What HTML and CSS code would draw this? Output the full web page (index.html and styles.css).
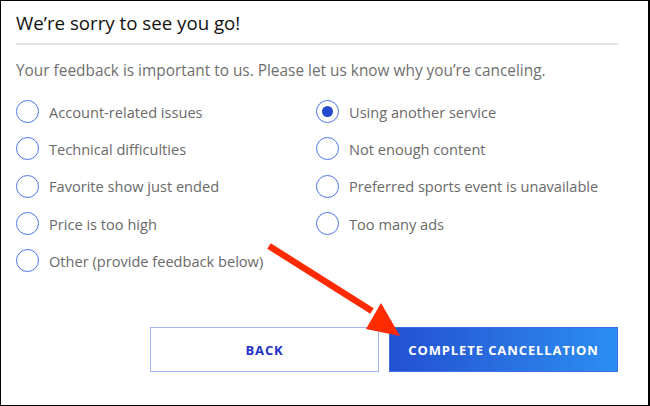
FILE: index.html
```html
<!DOCTYPE html>
<html>
<head>
<meta charset="utf-8">
<link rel="stylesheet" href="styles.css">
</head>
<body>
<div class="frame">
  <h1 class="title">We’re sorry to see you go!</h1>
  <div class="divider"></div>
  <p class="lead">Your feedback is important to us. Please let us know why you’re canceling.</p>
  <div class="options">
    <div class="col">
      <label class="opt"><span class="radio"></span>Account-related issues</label>
      <label class="opt"><span class="radio"></span>Technical difficulties</label>
      <label class="opt"><span class="radio"></span>Favorite show just ended</label>
      <label class="opt"><span class="radio"></span>Price is too high</label>
      <label class="opt"><span class="radio"></span>Other (provide feedback below)</label>
    </div>
    <div class="col">
      <label class="opt"><span class="radio checked"></span>Using another service</label>
      <label class="opt"><span class="radio"></span>Not enough content</label>
      <label class="opt"><span class="radio"></span>Preferred sports event is unavailable</label>
      <label class="opt"><span class="radio"></span>Too many ads</label>
    </div>
  </div>
  <div class="actions">
    <button class="btn btn-back">BACK</button>
    <button class="btn btn-complete">COMPLETE CANCELLATION</button>
  </div>
  <svg class="arrow" width="650" height="406" viewBox="0 0 650 406">
    <line x1="269" y1="246" x2="372" y2="311" stroke="#ff2a00" stroke-width="6.5" stroke-linecap="butt"/>
    <polygon points="400,336 366,329 381,303" fill="#ff2a00"/>
  </svg>
</div>
</body>
</html>
```
FILE: styles.css
```css
html, body {
  margin: 0;
  padding: 0;
  background: #fff;
}
.frame {
  position: relative;
  box-sizing: border-box;
  width: 650px;
  height: 406px;
  border-style: solid;
  border-color: #000;
  border-width: 1px 2px 1px 1px;
  padding: 0 30px 0 15px;
  font-family: "Open Sans", "Liberation Sans", sans-serif;
  overflow: hidden;
}
.title {
  margin: 0;
  padding-top: 9px;
  font-size: 18.7px;
  font-weight: 500;
  color: #111;
  line-height: 26px;
}
.divider {
  margin-top: 7px;
  height: 2px;
  background: #e3e3e3;
}
.lead {
  margin: 15px 0 0 0;
  font-size: 15.4px;
  line-height: 22px;
  color: #6f6f6f;
}
.options {
  display: grid;
  grid-template-columns: 300px 1fr;
  margin-top: 11px;
}
.col {
  display: flex;
  flex-direction: column;
}
.opt {
  display: flex;
  align-items: center;
  height: 37.3px;
  font-size: 14.6px;
  color: #6a6a6a;
}
.radio {
  box-sizing: border-box;
  width: 23px;
  height: 23px;
  border: 1.5px solid #4d74e4;
  border-radius: 50%;
  margin-right: 10px;
  flex: none;
  display: flex;
  align-items: center;
  justify-content: center;
}
.radio.checked::after {
  content: "";
  width: 11px;
  height: 11px;
  border-radius: 50%;
  background: #2449cc;
}
.actions {
  display: flex;
  justify-content: flex-end;
  gap: 10px;
  margin-top: 48px;
}
.btn {
  box-sizing: border-box;
  width: 229px;
  height: 45px;
  font-family: "Open Sans", "Liberation Sans", sans-serif;
  font-weight: 700;
  font-size: 13px;
  letter-spacing: 0.9px;
  cursor: pointer;
}
.btn-back {
  background: #fff;
  border: 1.5px solid #a5b4f0;
  color: #2232c8;
}
.btn-complete {
  border: 1px solid #3a70e8;
  color: #fff;
  background: linear-gradient(90deg, #2350d2 0%, #2a72e2 55%, #2b8ef2 100%);
}
.arrow {
  position: absolute;
  left: -1px;
  top: -1px;
  pointer-events: none;
}
```
